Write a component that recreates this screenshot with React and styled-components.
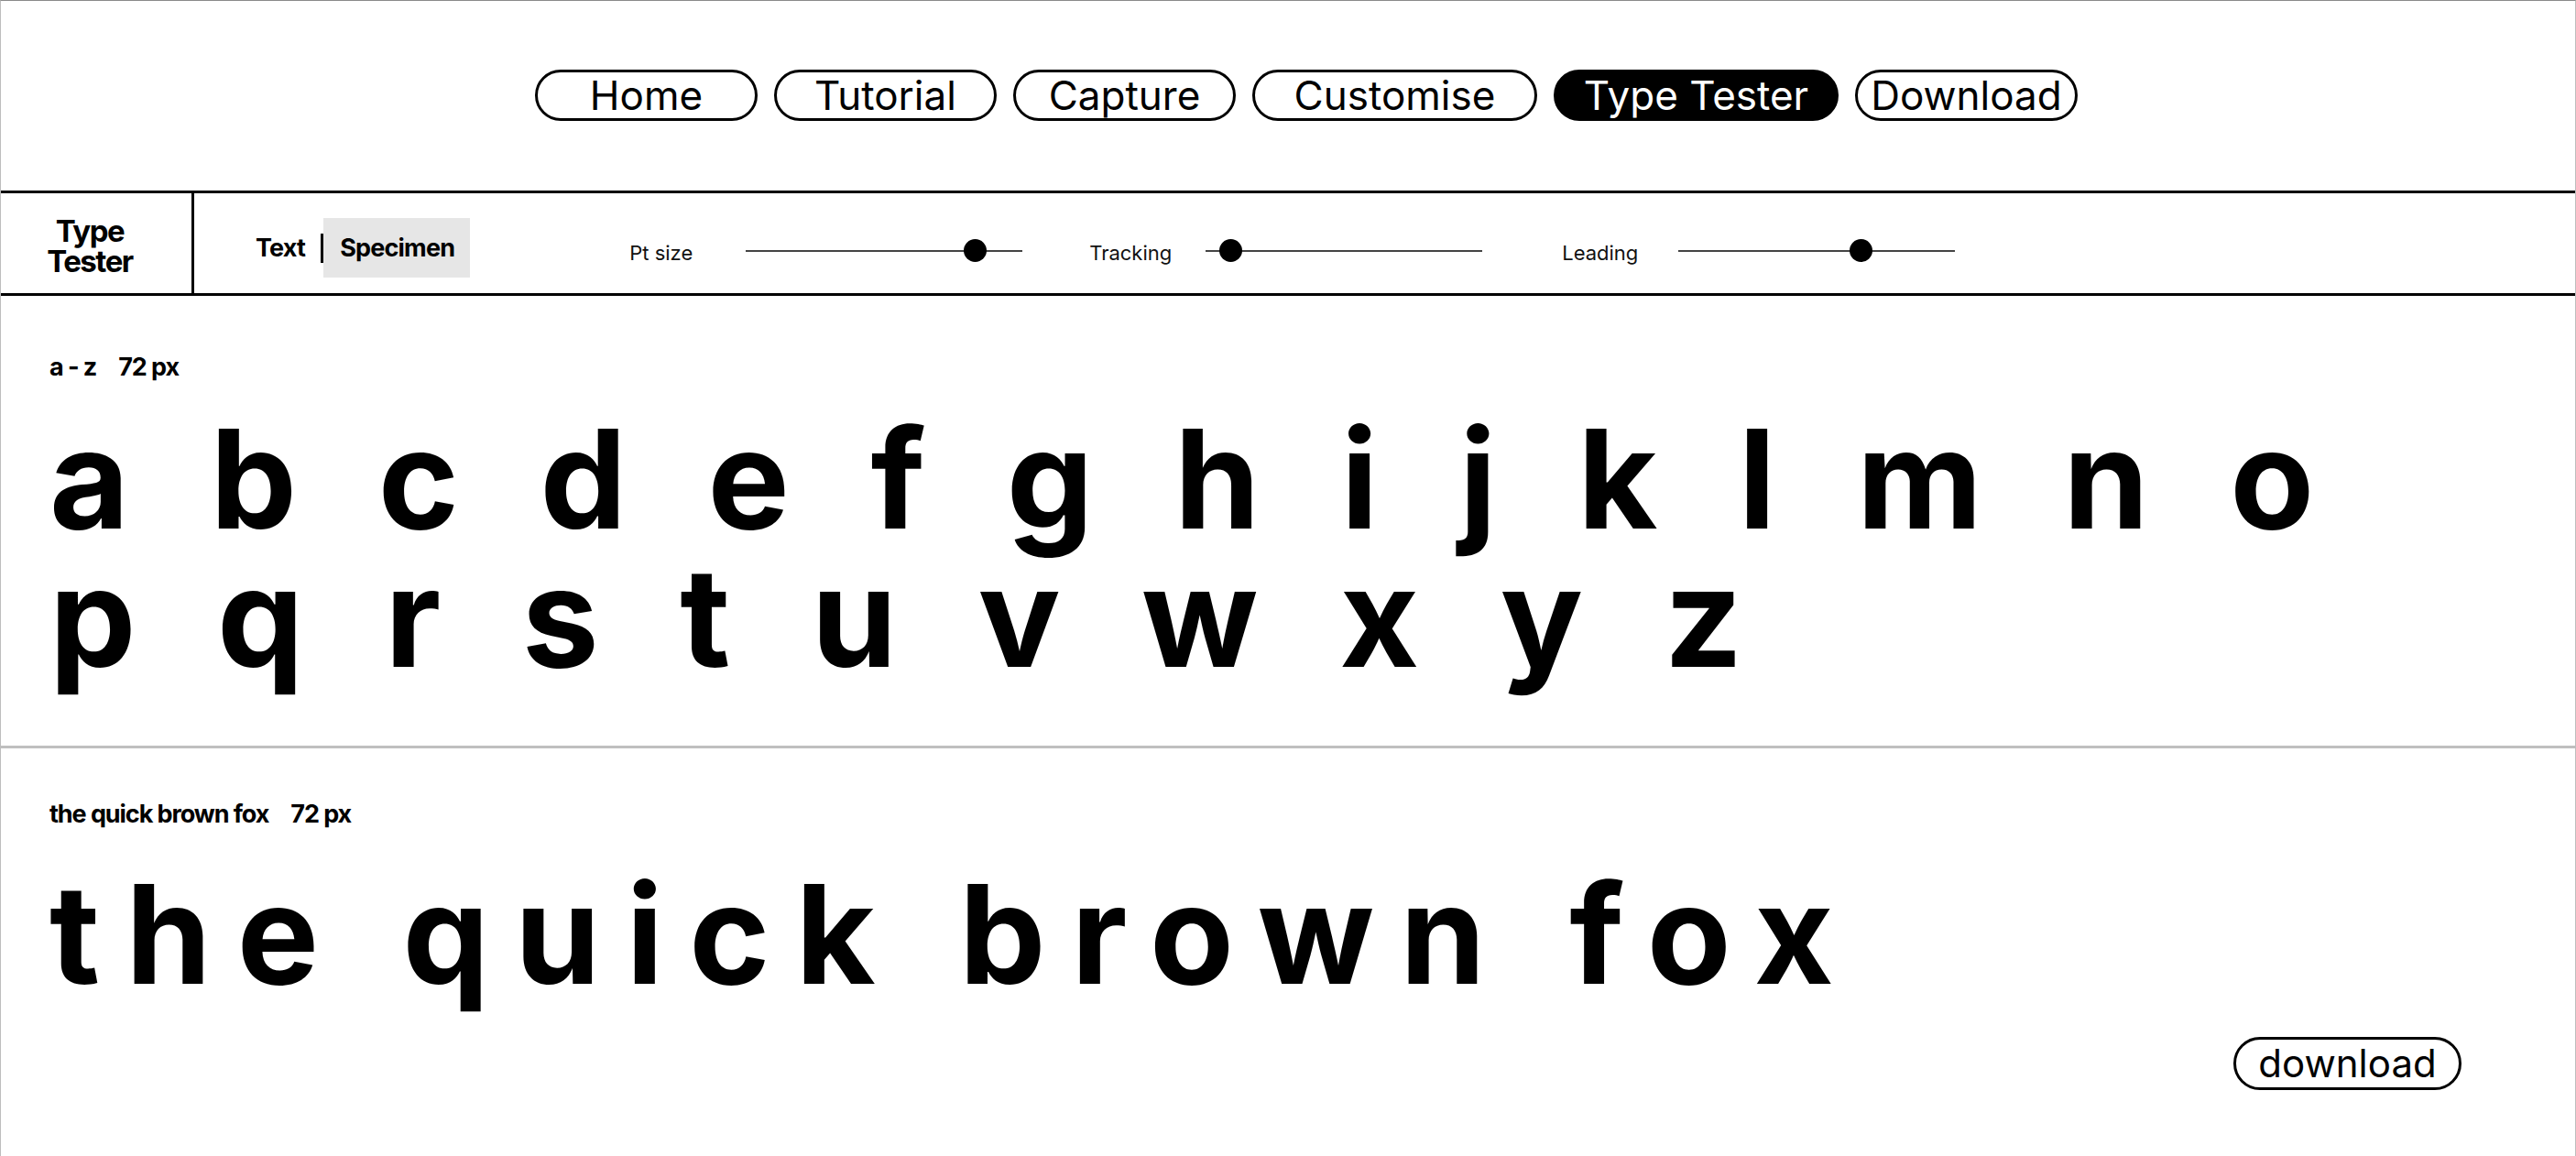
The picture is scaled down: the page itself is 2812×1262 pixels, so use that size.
import React from 'react';
import styled, {createGlobalStyle} from 'styled-components';

const GlobalStyle = createGlobalStyle`
  html, body {
    margin: 0;
    padding: 0;
    background: #fff;
  }
  body {
    font-family: Inter, "Noto Sans", sans-serif;
    color: #000;
  }
  * {
    box-sizing: border-box;
  }
`;

const Page = styled.div`
  min-height: 100vh;
  border-top: 1px solid #8a8a8a;
  border-left: 1px solid #bdbdbd;
  border-right: 1px solid #bdbdbd;
`;

const Nav = styled.nav`
  height: 207px;
  display: flex;
  align-items: center;
  justify-content: center;
  gap: 18px;
  padding-left: 40px;
  padding-bottom: 2px;
`;

const NavButton = styled.a`
  width: ${p => (p.$wide ? 311 : 243)}px;
  height: 56px;
  border: 3px solid #000;
  border-radius: 28px;
  display: flex;
  align-items: center;
  justify-content: center;
  font-size: 44px;
  line-height: 1;
  background: ${p => (p.$active ? '#000' : '#fff')};
  color: ${p => (p.$active ? '#fff' : '#000')};
  text-decoration: none;
  cursor: pointer;
`;

const Toolbar = styled.div`
  display: flex;
  height: 115px;
  border-top: 3px solid #000;
  border-bottom: 3px solid #000;
`;

const Brand = styled.div`
  width: 211px;
  border-right: 3px solid #000;
  display: flex;
  flex-direction: column;
  align-items: center;
  justify-content: center;
  padding: 6px 14px 0 0;
  font-size: 33px;
  font-weight: 700;
  line-height: 33px;
  letter-spacing: -0.045em;
  text-align: center;
`;

const Controls = styled.div`
  flex: 1;
  display: flex;
  align-items: center;
  padding-top: 10px;
`;

const ModeSwitch = styled.div`
  display: flex;
  align-items: center;
  margin-left: 67px;
`;

const ModeItem = styled.div`
  height: 65px;
  display: flex;
  align-items: center;
  padding: ${p => (p.$active ? '0 17px 0 18px' : '0')};
  background: ${p => (p.$active ? '#e6e6e6' : 'transparent')};
  font-size: 27px;
  font-weight: 700;
  letter-spacing: -0.03em;
`;

const Divider = styled.span`
  width: 3px;
  height: 32px;
  margin-left: 17px;
  background: #000;
`;

const Sliders = styled.div`
  display: flex;
  align-items: center;
  margin-left: 174px;
  margin-top: 6px;
`;

const SliderGroup = styled.div`
  display: flex;
  align-items: center;
  margin-left: ${p => p.$offset}px;
`;

const SliderLabel = styled.span`
  width: 127px;
  padding-top: 5px;
  font-size: 22px;
  color: #111;
`;

const Track = styled.div`
  position: relative;
  width: 302px;
  height: 25px;

  &::before {
    content: '';
    position: absolute;
    left: 0;
    right: 0;
    top: 12px;
    height: 2px;
    background: #444;
  }
`;

const Thumb = styled.span`
  position: absolute;
  top: 0;
  left: calc(${p => p.$pos}% - 12.5px);
  width: 25px;
  height: 25px;
  border-radius: 50%;
  background: #000;
`;

const Section = styled.section`
  padding: ${p => p.$top}px 124px ${p => p.$bottom}px 53px;
  border-bottom: ${p => (p.$divider ? '3px solid #bfbfbf' : 'none')};
`;

const SectionLabel = styled.div`
  display: flex;
  gap: 24px;
  font-size: 27px;
  font-weight: 700;
  line-height: 27px;
  letter-spacing: -0.04em;
`;

const Specimen = styled.div`
  margin-top: ${p => p.$gap}px;
  font-size: 150px;
  font-weight: 700;
  line-height: 151px;
  letter-spacing: ${p => p.$tracking}px;
  white-space: nowrap;
`;

const Footer = styled.div`
  display: flex;
  justify-content: flex-end;
  margin-top: 37px;
`;

const DownloadButton = styled.button`
  width: 249px;
  height: 58px;
  border: 3px solid #000;
  border-radius: 29px;
  background: #fff;
  color: #000;
  font-family: Inter, "Noto Sans", sans-serif;
  font-size: 42px;
  line-height: 1;
  padding: 0;
  cursor: pointer;
`;

const navItems = [
  {label: 'Home'},
  {label: 'Tutorial'},
  {label: 'Capture'},
  {label: 'Customise', wide: true},
  {label: 'Type Tester', wide: true, active: true},
  {label: 'Download'},
];

const sliders = [
  {label: 'Pt size', pos: 83, offset: 0},
  {label: 'Tracking', pos: 9, offset: 73},
  {label: 'Leading', pos: 66, offset: 87},
];

export default function App() {
  return (
    <>
      <GlobalStyle />
      <Page>
        <Nav>
          {navItems.map(item => (
            <NavButton key={item.label} $wide={item.wide} $active={item.active}>
              {item.label}
            </NavButton>
          ))}
        </Nav>

        <Toolbar>
          <Brand>
            <span>Type</span>
            <span>Tester</span>
          </Brand>
          <Controls>
            <ModeSwitch>
              <ModeItem>Text</ModeItem>
              <Divider />
              <ModeItem $active>Specimen</ModeItem>
            </ModeSwitch>
            <Sliders>
              {sliders.map(s => (
                <SliderGroup key={s.label} $offset={s.offset}>
                  <SliderLabel>{s.label}</SliderLabel>
                  <Track>
                    <Thumb $pos={s.pos} />
                  </Track>
                </SliderGroup>
              ))}
            </Sliders>
          </Controls>
        </Toolbar>

        <Section $top={64} $bottom={65} $divider>
          <SectionLabel>
            <span>a - z</span>
            <span>72 px</span>
          </SectionLabel>
          <Specimen $gap={33} $tracking={26.5}>
            a b c d e f g h i j k l m n o
            <br />
            p q r s t u v w x y z
          </Specimen>
        </Section>

        <Section $top={58} $bottom={0}>
          <SectionLabel>
            <span>the quick brown fox</span>
            <span>72 px</span>
          </SectionLabel>
          <Specimen $gap={42} $tracking={28}>the quick brown fox</Specimen>
          <Footer>
            <DownloadButton>download</DownloadButton>
          </Footer>
        </Section>
      </Page>
    </>
  );
}
